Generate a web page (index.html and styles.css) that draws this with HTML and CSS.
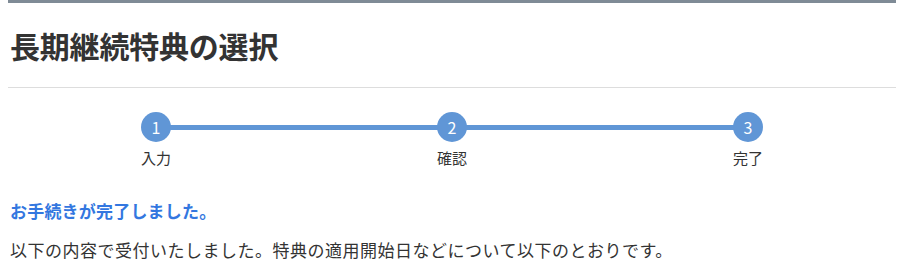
FILE: index.html
```html
<!DOCTYPE html>
<html lang="ja">
<head>
    <meta charset="UTF-8">
    <meta name="viewport" content="width=device-width, initial-scale=1.0">
    <title>長期継続特典の選択</title>
    <link rel="stylesheet" href="styles.css">
</head>
<body>
    <div class="page">
        <!-- 見出し -->
        <div class="page-header">
            <h1>長期継続特典の選択</h1>
        </div>

        <!-- ステップ -->
        <div class="steps">
            <div class="step">
                <div class="step-num">1</div>
                <div class="step-label">入力</div>
            </div>
            <div class="step">
                <div class="step-num">2</div>
                <div class="step-label">確認</div>
            </div>
            <div class="step">
                <div class="step-num">3</div>
                <div class="step-label">完了</div>
            </div>
        </div>

        <!-- 完了メッセージ -->
        <p class="done-title">お手続きが完了しました。</p>
        <p class="done-text">以下の内容で受付いたしました。特典の適用開始日などについて以下のとおりです。</p>
    </div>
</body>
</html>
```

FILE: styles.css
```css
* {
    margin: 0;
    padding: 0;
    box-sizing: border-box;
}

body {
    background: #ffffff;
    color: #333333;
    font-family: "Noto Sans CJK JP", "Noto Sans", sans-serif;
    padding: 0 8px;
}

.page {
    border-top: 3px solid #7f8b96;
}

/* 見出し */
.page-header {
    padding: 22px 2px 0;
    height: 85px;
    border-bottom: 1px solid #dddddd;
}

.page-header h1 {
    font-size: 30px;
    font-weight: 700;
    line-height: 40px;
    letter-spacing: -0.2px;
    color: #333333;
}

/* ステップ */
.steps {
    display: grid;
    grid-template-columns: repeat(3, 1fr);
    padding-top: 24px;
    position: relative;
}

.steps::before {
    content: "";
    position: absolute;
    top: 37px;
    left: calc(100% / 6);
    right: calc(100% / 6);
    height: 5px;
    background: #6096d6;
}

.step {
    display: flex;
    flex-direction: column;
    align-items: center;
    position: relative;
}

.step-num {
    width: 30px;
    height: 30px;
    border-radius: 50%;
    background: #6096d6;
    color: #ffffff;
    font-size: 16px;
    line-height: 30px;
    text-align: center;
}

.step-label {
    margin-top: 5px;
    font-size: 15px;
    line-height: 22px;
    color: #333333;
}

/* 完了メッセージ */
.done-title {
    margin-top: 30px;
    padding-left: 2px;
    font-size: 17px;
    font-weight: 700;
    letter-spacing: 0.2px;
    line-height: 24px;
    color: #3377e0;
}

.done-text {
    margin-top: 14px;
    padding-left: 2px;
    font-size: 17px;
    letter-spacing: 0.5px;
    line-height: 26px;
    color: #333333;
}
```
